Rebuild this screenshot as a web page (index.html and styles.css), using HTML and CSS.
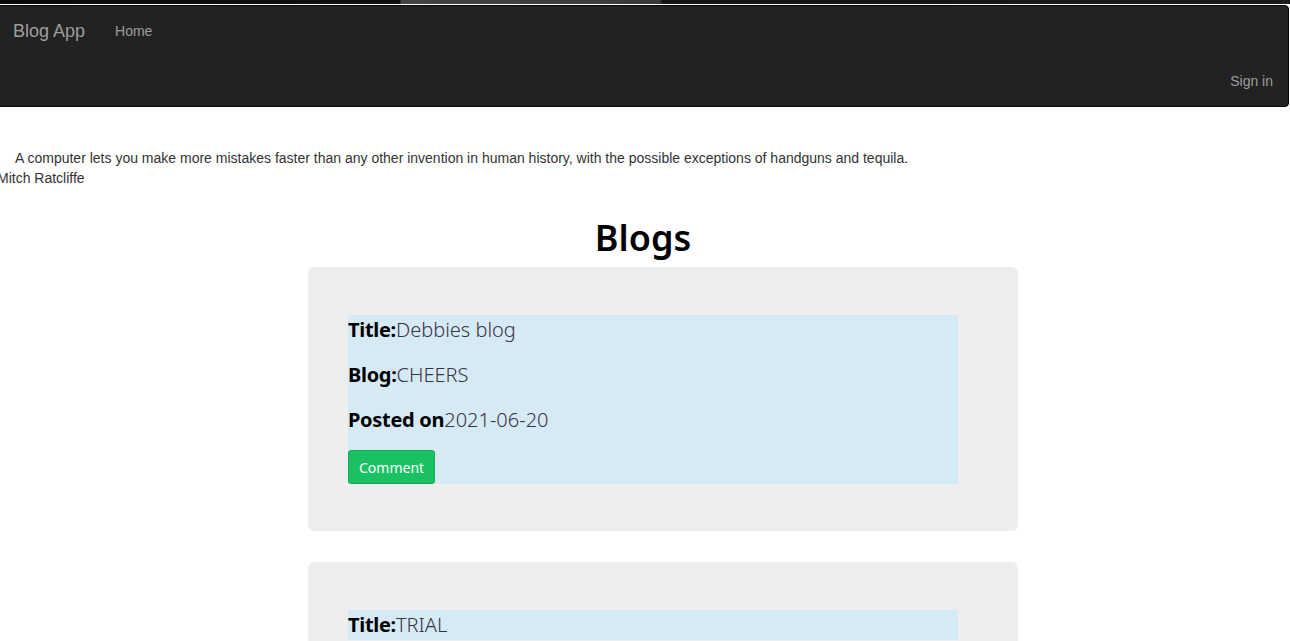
FILE: index.html
```html
<!DOCTYPE html>
<html>
<head>
<meta charset="utf-8">
<title>Blog App</title>
<link rel="stylesheet" href="styles.css">
</head>
<body>
<div class="topstrip"></div>
<nav class="navbar">
  <div class="nav-row">
    <a class="brand" href="#">Blog App</a>
    <a class="nav-link" href="#">Home</a>
  </div>
  <div class="nav-row nav-right">
    <a class="nav-link" href="#">Sign in</a>
  </div>
</nav>
<div class="quote">
  <p class="quote-text">A computer lets you make more mistakes faster than any other invention in human history, with the possible exceptions of handguns and tequila.</p>
  <p class="quote-author">Mitch Ratcliffe</p>
</div>
<h1 class="heading">Blogs</h1>
<main class="blogs">
  <section class="card">
    <div class="entry">
      <p class="line"><b>Title:</b><span>Debbies blog</span></p>
      <p class="line"><b>Blog:</b><span>CHEERS</span></p>
      <p class="line"><b>Posted on</b><span>2021-06-20</span></p>
      <button class="btn">Comment</button>
    </div>
  </section>
  <section class="card">
    <div class="entry">
      <p class="line"><b>Title:</b><span>TRIAL</span></p>
    </div>
  </section>
</main>
</body>
</html>
```
FILE: styles.css
```css
html, body {
  margin: 0;
  padding: 0;
  background: #fff;
  overflow: hidden;
}
body {
  font-family: "Liberation Sans", Arial, sans-serif;
  font-size: 14px;
  color: #333;
}
.topstrip {
  height: 4px;
  background: linear-gradient(to right, #0a0a0a 0, #111 400px, #444 401px, #3a3a3a 660px, #151515 662px, #1a1a1a 100%);
}
.navbar {
  margin: 1px 1px 0 -5px;
  height: 100px;
  background: #222;
  border: 1px solid #080808;
  border-radius: 4px;
  display: flex;
  flex-direction: column;
}
.nav-row {
  display: flex;
  height: 50px;
  align-items: center;
}
.nav-right {
  justify-content: flex-end;
}
.brand {
  font-size: 18px;
  color: #9d9d9d;
  text-decoration: none;
  padding: 0 15px 0 17px;
  line-height: 50px;
}
.nav-link {
  color: #9d9d9d;
  text-decoration: none;
  padding: 0 15px;
  line-height: 50px;
}
.quote {
  margin-top: 41px;
}
.quote p {
  margin: 0;
  line-height: 20px;
}
.quote-text {
  padding-left: 15px;
}
.quote .quote-author {
  margin-left: -3px;
}
.heading {
  font-family: "Noto Sans", "Open Sans", sans-serif;
  font-weight: 600;
  font-size: 36px;
  color: #000;
  text-align: center;
  margin: 23px 0 0 -4px;
  line-height: 54px;
  height: 56px;
}
.blogs {
  width: 710px;
  margin-left: calc(50% - 337px);
  display: flex;
  flex-direction: column;
  gap: 31px;
}
.card {
  background: #eee;
  border-radius: 6px;
  padding: 48px 60px 47px 40px;
}
.entry {
  background: #d6eaf5;
  font-family: "Noto Sans", "Open Sans", sans-serif;
}
.line {
  margin: 0 0 15px;
  font-size: 20px;
  line-height: 30px;
  color: #000;
}
.line b {
  font-weight: 700;
  letter-spacing: -0.3px;
}
.line span {
  font-weight: 300;
  color: #3a3346;
}
.btn {
  display: block;
  font-family: "Noto Sans", "Open Sans", sans-serif;
  font-size: 14px;
  color: #fff;
  background: #19c163;
  border: 1px solid #14a954;
  border-radius: 3px;
  height: 34px;
  padding: 0 10px;
  cursor: pointer;
}
```
